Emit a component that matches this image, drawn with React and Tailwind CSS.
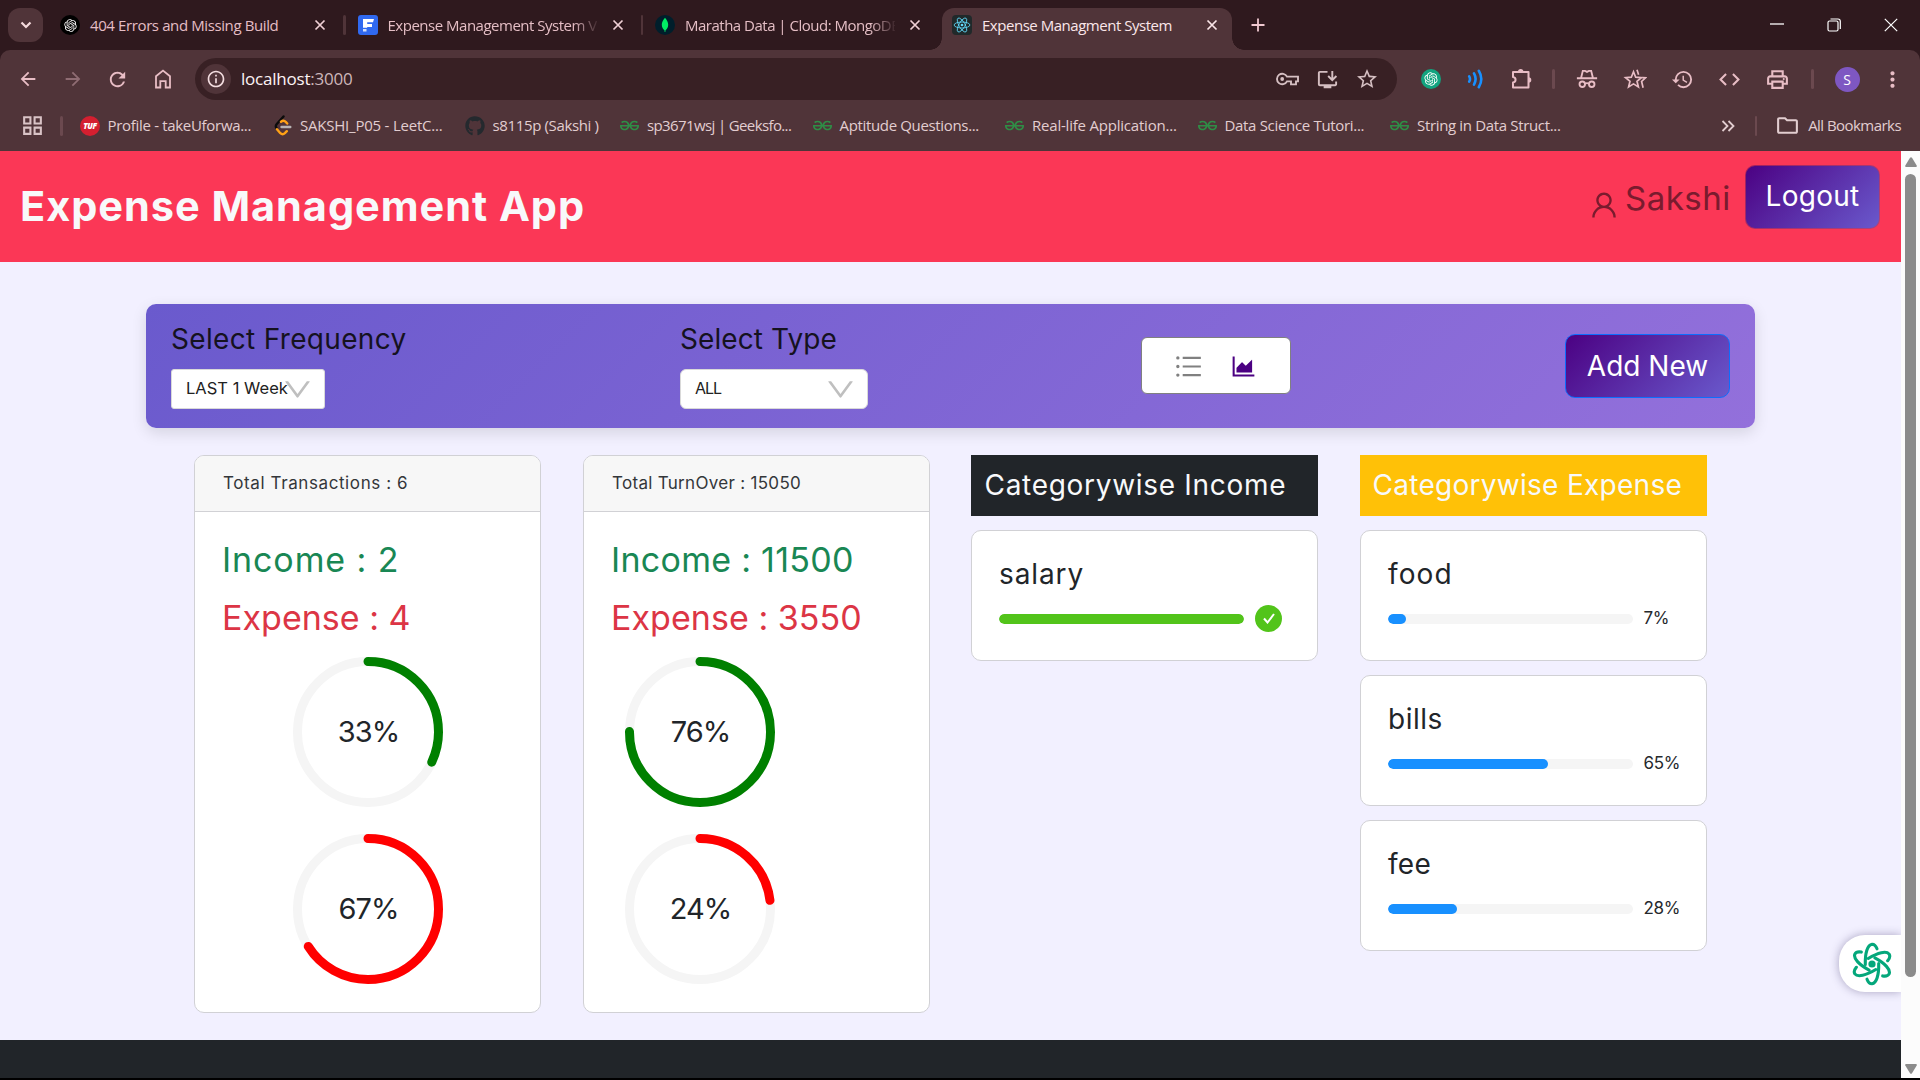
import React from "react";
import {
  MdArrowBack, MdArrowForward, MdRefresh, MdInfoOutline, MdOutlineInstallDesktop, MdStarOutline,
  MdHistory, MdCode, MdOutlinePrint, MdMoreVert, MdOutlineFolder, MdOutlineGridView,
} from "react-icons/md";
import { AiOutlineUnorderedList, AiOutlineAreaChart, AiOutlineUser, AiOutlineDown } from "react-icons/ai";
import { SiGeeksforgeeks } from "react-icons/si";
import { FaGithub } from "react-icons/fa";
import { RiOpenaiFill } from "react-icons/ri";

/* ---------- small drawings ---------- */

const CloseX = ({ className }) => (
  <svg viewBox="0 0 12 12" className={"h-3 w-3 shrink-0 " + className} stroke="currentColor" strokeWidth="1.7" fill="none">
    <path d="M1.5 1.5l9 9M10.5 1.5l-9 9" />
  </svg>
);

const ReactLogo = ({ className }) => (
  <svg viewBox="0 0 24 24" className={className} fill="none" stroke="#61dafb" strokeWidth="1.1">
    <ellipse cx="12" cy="12" rx="10.5" ry="4" />
    <ellipse cx="12" cy="12" rx="10.5" ry="4" transform="rotate(60 12 12)" />
    <ellipse cx="12" cy="12" rx="10.5" ry="4" transform="rotate(120 12 12)" />
    <circle cx="12" cy="12" r="1.8" fill="#61dafb" stroke="none" />
  </svg>
);

const HomeIcon = () => (
  <svg viewBox="0 0 20 22" className="h-[22px] w-5" fill="none" stroke="currentColor" strokeWidth="1.8">
    <path d="M3 19.5V8.2L10 2.6l7 5.6v11.3h-4.3v-6.3H7.3v6.3z" />
  </svg>
);

const KeyIcon = () => (
  <svg viewBox="0 0 24 16" className="h-4 w-6" fill="none" stroke="currentColor" strokeWidth="1.9">
    <path d="M12 5.6A5.3 5.3 0 1 0 12 10.4h4v3h5v-3h2V5.6z" />
    <circle cx="7.2" cy="8" r="1.9" fill="currentColor" stroke="none" />
  </svg>
);

const PuzzleIcon = () => (
  <svg viewBox="0 0 24 24" className="ml-0.5 h-6 w-6" fill="none" stroke="currentColor" strokeWidth="2" strokeLinejoin="round">
    <path d="M3 5h15.5v15.5H3V15.5c3.4-.6 3.4-5 0-5.6z" />
    <path d="M8 4.800a2.700 2.700 0 0 1 5.400 0zM18.600 10.200a2.700 2.700 0 0 1 0 5.400z" fill="currentColor" stroke="none" />
  </svg>
);

const WavesIcon = () => (
  <svg viewBox="0 0 18 20" className="h-5 w-[18px]" fill="none" stroke="#1890ff" strokeWidth="2.6" strokeLinecap="round">
    <path d="M2.2 7.3q1.6 2.7 0 5.4M7 4.4q3.2 5.6 0 11.2M11.8 1.8q5 8.2 0 16.4" />
  </svg>
);

const IncognitoIcon = () => (
  <svg viewBox="0 0 20 20" className="h-[22px] w-[22px]" fill="none" stroke="currentColor" strokeWidth="1.7">
    <path d="M.8 9.3h18.400M4.600 9l1.600-6.400h2L10 3.500l1.800-.9h2L15.400 9" />
    <circle cx="5.700" cy="14.800" r="2.500" />
    <circle cx="14.300" cy="14.800" r="2.500" />
    <path d="M8 14.300q2-1 4 0" />
  </svg>
);

const StarsIcon = () => (
  <svg viewBox="0 0 24 22" className="h-[22px] w-6" fill="none" stroke="currentColor" strokeWidth="1.7">
    <path d="M10.500 3.800l2.200 5.400 5.700.4-4.400 3.700 1.400 5.700-4.900-3.100-4.900 3.100L7 13.300 2.600 9.600l5.700-.4z" />
    <path d="M14 1.800l1.600 4.900M19.300 9.600l3.200.2-3.900 3.700 1.500 6.200" />
  </svg>
);

const LeetCodeIcon = () => (
  <svg viewBox="0 0 18 21" className="h-[21px] w-[18px]" fill="none" strokeWidth="2.400" strokeLinecap="round">
    <path d="M9.500 1.500L2.800 9q-1.800 2-.2 4.300" stroke="#0b0b0b" />
    <path d="M3 14.200l3.300 4q2.300 2 4.600 0l1.900-2M7 6.800q2.500-2 5 .3l1.200 1.400" stroke="#ffa116" />
    <path d="M7.500 12h8.800" stroke="#b8b3b3" />
  </svg>
);

const LeafIcon = () => (
  <svg viewBox="0 0 20 20" className="h-5 w-5">
    <circle cx="10" cy="10" r="10" fill="#001e2b" />
    <path d="M10 2.800c2 2.300 3.200 4.600 3.200 7 0 2.500-1.200 4.200-2.700 5.400L10.300 17h-.6l-.2-1.800C8 14 6.800 12.300 6.800 9.800c0-2.400 1.200-4.700 3.200-7z" fill="#00ed64" />
  </svg>
);

const FreelancerIcon = () => (
  <span className="flex h-5 w-5 items-center justify-center rounded-[3px] bg-[#3069f0]">
    <svg viewBox="0 0 14 14" className="h-[14px] w-[14px]" fill="#fff">
      <path d="M2 1h11l-1 3.200H6.200V6H11v3H6.200v.8H2z" />
      <path d="M2 11h3.500v2.500H2z" opacity=".8" />
    </svg>
  </span>
);

const AtomIcon = () => (
  <svg viewBox="0 0 40 44" className="h-11 w-10" fill="none" stroke="#04a77b" strokeWidth="3.1" strokeLinecap="round">
    {[0, 60, 120, 180, 240, 300].map((a) => (
      <path key={a} transform={`rotate(${a} 20 22)`} d="M13.300 22.500C13 11 15.500 2.800 20 2.200c2.200-.1 3.900 1.600 5 4.600" />
    ))}
    <circle cx="20" cy="22" r="3.600" fill="#04a77b" stroke="none" />
  </svg>
);

/* ---------- browser chrome ---------- */

const chromeFont = "font-['Open_Sans','Noto_Sans',sans-serif] whitespace-pre";

function Tab({ icon, title, tracking, fade, separator }) {
  return (
    <div className="flex h-full w-[297.5px] items-center pl-[11px]">
      <span className="h-5 w-5 shrink-0">{icon}</span>
      <span
        className={
          "ml-[10px] w-[210px] shrink-0 text-[15px] text-[#e5bec5] " + tracking +
          (fade ? " [mask-image:linear-gradient(90deg,#000_185px,transparent_212px)]" : "")
        }
      >
        {title}
      </span>
      <CloseX className="ml-[14px] text-[#f0d0d5]" />
      {separator && <span className="ml-[17px] h-5 w-[2.5px] rounded bg-[#503439]" />}
    </div>
  );
}

function TabStrip() {
  return (
    <div className="flex h-[50px] items-center bg-[#2f191e]">
      <button className="ml-2 mr-[6px] flex h-[34px] w-[35px] items-center justify-center rounded-xl bg-[#503439]">
        <svg viewBox="0 0 12 8" className="h-2 w-3" fill="none" stroke="#f5dadd" strokeWidth="2.2">
          <path d="M1.5 1.5L6 6l4.5-4.5" />
        </svg>
      </button>
      <Tab
        title="404 Errors and Missing Build"
        tracking="tracking-[-0.39px]"
        icon={<span className="flex h-5 w-5 items-center justify-center rounded-full bg-black text-white"><RiOpenaiFill size={15} /></span>}
        separator
      />
      <Tab title="Expense Management System V" tracking="tracking-[-0.49px]" fade icon={<FreelancerIcon />} separator />
      <Tab title="Maratha Data | Cloud: MongoDB" tracking="tracking-[-0.5px]" fade icon={<LeafIcon />} />
      <div className="relative mt-2 flex h-[42px] w-[290px] items-center self-start rounded-t-[12px] bg-[#503439] pl-[10.5px]">
        <span className="absolute -left-3 bottom-0 h-3 w-3 bg-[radial-gradient(circle_at_0_0,#2f191e_11.5px,#503439_12px)]" />
        <span className="absolute -right-3 bottom-0 h-3 w-3 bg-[radial-gradient(circle_at_100%_0,#2f191e_11.5px,#503439_12px)]" />
        <span className="mb-2 flex h-5 w-5 items-center justify-center rounded-sm bg-[#20292a]">
          <ReactLogo className="h-[18px] w-[18px]" />
        </span>
        <span className="mb-2 ml-[10px] w-[210px] text-[15px] tracking-[-0.47px] text-[#fbe6e9]">Expense Managment System</span>
        <CloseX className="mb-2 ml-[14px] text-[#fbe6e9]" />
      </div>
      <svg viewBox="0 0 14 14" className="ml-[19px] h-[14px] w-[14px]" stroke="#f0c8d0" strokeWidth="1.8">
        <path d="M7 .5v13M.5 7h13" />
      </svg>
      <div className="ml-auto mr-[22px] flex items-center gap-[43px] text-white">
        <svg viewBox="0 0 14 14" className="h-[14px] w-[14px]" stroke="currentColor" strokeWidth="1.3"><path d="M0 6h14" /></svg>
        <svg viewBox="0 0 14 14" className="h-[14px] w-[14px]" fill="none" stroke="currentColor" strokeWidth="1.2">
          <rect x="1" y="3" width="10" height="10" rx="1.5" />
          <path d="M3.5 1h7.500a2.300 2.300 0 0 1 2.300 2.300V11" />
        </svg>
        <svg viewBox="0 0 14 14" className="h-[14px] w-[14px]" stroke="currentColor" strokeWidth="1.2"><path d="M.8.8l12.400 12.400M13.200.8L.8 13.200" /></svg>
      </div>
    </div>
  );
}

const Cell = ({ w, children }) => <span className={"flex shrink-0 items-center justify-center " + w}>{children}</span>;

function Toolbar() {
  return (
    <div className="flex h-[58px] items-center text-[#e8bdc5]">
      <div className="ml-[5px] flex">
        <Cell w="w-[45px]"><MdArrowBack size={22} /></Cell>
        <Cell w="w-[45px]"><MdArrowForward size={22} className="text-[#8f6c73]" /></Cell>
        <Cell w="w-[45px]"><MdRefresh size={23} /></Cell>
        <Cell w="w-[45px]"><HomeIcon /></Cell>
      </div>
      <div className="ml-[10px] flex h-[42px] w-[1202px] items-center rounded-full bg-[#382024] pl-[6px] pr-[10px] text-[#d5bfc2]">
        <span className="flex h-[30px] w-[30px] items-center justify-center rounded-full bg-[#503439] text-[#f3dde0]">
          <MdInfoOutline size={20} />
        </span>
        <span className="ml-[10px] text-[17px] tracking-[-0.22px] text-[#fdf3f4]">
          localhost<span className="text-[#cdb6ba]">:3000</span>
        </span>
        <div className="ml-auto flex">
          <Cell w="w-10"><KeyIcon /></Cell>
          <Cell w="w-10"><MdOutlineInstallDesktop size={23} /></Cell>
          <Cell w="w-10"><MdStarOutline size={24} /></Cell>
        </div>
      </div>
      <div className="ml-[11px] flex">
        <Cell w="w-[45px]">
          <span className="flex h-5 w-5 items-center justify-center rounded-full bg-[#12a37f] text-white"><RiOpenaiFill size={16} /></span>
        </Cell>
        <Cell w="w-[45px]"><WavesIcon /></Cell>
        <Cell w="w-[45px]"><PuzzleIcon /></Cell>
      </div>
      <span className="ml-[9px] mr-[9px] h-5 w-[2.5px] rounded bg-[#6b494f]" />
      <div className="flex">
        <Cell w="w-[47.5px]"><IncognitoIcon /></Cell>
        <Cell w="w-[47.5px]"><StarsIcon /></Cell>
        <Cell w="w-[47.5px]"><MdHistory size={23} /></Cell>
        <Cell w="w-[47.5px]"><MdCode size={25} /></Cell>
        <Cell w="w-[47.5px]"><MdOutlinePrint size={25} /></Cell>
      </div>
      <span className="ml-[10px] mr-[21px] h-5 w-[2.5px] rounded bg-[#6b494f]" />
      <span className="flex h-[25px] w-[25px] items-center justify-center rounded-full bg-[#7e57c2] text-[14px] text-white">S</span>
      <MdMoreVert size={25} className="ml-[20px]" />
    </div>
  );
}

const gfg = <SiGeeksforgeeks size={19} className="text-[#2f8d46]" />;
const bookmarks = [
  {
    label: "Profile - takeUforwa...", w: "w-[192.5px]", t: "tracking-[-0.31px]",
    icon: <span className="flex h-5 w-5 items-center justify-center rounded-full bg-[#d41f30] text-[8px] font-extrabold italic tracking-[-0.3px] text-white">TUF</span>,
  },
  { label: "SAKSHI_P05 - LeetC...", w: "w-[192.5px]", t: "tracking-[-0.22px]", icon: <LeetCodeIcon /> },
  { label: "s8115p (Sakshi )", w: "w-[154.5px]", t: "tracking-[-0.36px]", icon: <FaGithub size={20} className="text-[#24292e]" /> },
  { label: "sp3671wsj | Geeksfo...", w: "w-[192.5px]", t: "tracking-[-0.62px]", icon: gfg },
  { label: "Aptitude Questions...", w: "w-[192.5px]", t: "tracking-[-0.34px]", icon: gfg },
  { label: "Real-life Application...", w: "w-[192.5px]", t: "tracking-[-0.21px]", icon: gfg },
  { label: "Data Science Tutori...", w: "w-[192.5px]", t: "tracking-[-0.32px]", icon: gfg },
  { label: "String in Data Struct...", w: "w-[192.5px]", t: "tracking-[-0.34px]", icon: gfg },
];

function BookmarksBar() {
  return (
    <div className="flex h-[43px] items-center pb-[8px] text-[15px] text-[#e2cdd0]">
      <MdOutlineGridView size={25} className="ml-5 text-[#d9c3c6]" />
      <span className="ml-[15px] mr-[17px] h-5 w-[2.5px] rounded bg-[#6b494f]" />
      {bookmarks.map((b) => (
        <div key={b.label} className={"flex shrink-0 items-center " + b.w}>
          <span className="flex w-[21px] justify-center">{b.icon}</span>
          <span className={"ml-[7px] " + b.t}>{b.label}</span>
        </div>
      ))}
      <svg viewBox="0 0 14 12" className="ml-auto h-3 w-[14px]" fill="none" stroke="currentColor" strokeWidth="1.8">
        <path d="M1.5 1l5 5-5 5M7.500 1l5 5-5 5" />
      </svg>
      <span className="ml-[20px] mr-[18px] h-5 w-[2.5px] rounded bg-[#6b494f]" />
      <MdOutlineFolder size={25} />
      <span className="ml-[8px] mr-[19px] tracking-[-0.55px]">All Bookmarks</span>
    </div>
  );
}

/* ---------- application ---------- */

const buttonBase =
  "flex items-center justify-center rounded-[10px] border bg-[linear-gradient(135deg,#4b0082,#6a5acd)] bg-origin-border text-[28px] leading-none text-white";

function AppHeader() {
  return (
    <header className="flex h-[111px] items-start bg-[#fb3756]">
      <h2 className="ml-[20px] mt-[30px] text-[41.5px] font-bold leading-[50px] tracking-[0.95px] text-[#f8f9fa]">
        Expense Management App
      </h2>
      <div className="ml-auto mr-[21px] mt-[14px] flex">
        <AiOutlineUser size={32} className="mt-[24px] text-[#7a1b2e]" />
        <span className="ml-[5px] mt-[12px] w-[120px] text-[33px] leading-[42px] tracking-[0.5px] text-[#7a1b2e]">Sakshi</span>
        <button className={buttonBase + " h-[64px] w-[135px] border-[#dc3545]/60 pb-[2px] tracking-[0.25px]"}>Logout</button>
      </div>
    </header>
  );
}

function Select({ value, className, valueClass }) {
  return (
    <div className={"flex h-[40px] items-center border border-[#d9d9d9] bg-white pl-[14px] text-[#222] " + className}>
      <span className={"grow whitespace-nowrap pb-[2px] " + valueClass}>{value}</span>
      <AiOutlineDown size={33} className="-ml-[10px] mr-[10px] shrink-0 text-[#bfbfbf]" />
    </div>
  );
}

function Filters() {
  return (
    <div className="ml-[146px] mt-[42px] flex h-[124px] w-[1609px] rounded-[10px] bg-[linear-gradient(135deg,#6a5acd,#9370db)] shadow-[0_5px_15px_rgba(0,0,0,0.12)]">
      <div className="ml-[25px] w-[509px] pt-[18px]">
        <h6 className="text-[28px] leading-[34px] tracking-[0.33px] text-[#15121f]">Select Frequency</h6>
        <Select value="LAST 1 Week" className="mt-[13px] w-[154px] rounded-[3px]" valueClass="text-[16.5px] tracking-[0.02px]" />
      </div>
      <div className="w-[461px] pt-[18px]">
        <h6 className="text-[28px] leading-[34px] tracking-[0.09px] text-[#15121f]">Select Type</h6>
        <Select value="ALL" className="mt-[13px] w-[188px] rounded-[6px]" valueClass="text-[16px] tracking-[-1px]" />
      </div>
      <div className="mt-[33px] flex h-[57px] w-[150px] items-center rounded-[6px] border border-[#808080] bg-white pl-[31px] pt-px">
        <AiOutlineUnorderedList size={31} className="text-[#808080]" />
        <AiOutlineAreaChart size={29} className="ml-[25px] text-[#4b0082]" />
      </div>
      <button className={buttonBase + " ml-auto mr-[25px] mt-[30px] h-[64px] w-[165px] border-[#0d6efd] pb-px"}>
        Add New
      </button>
    </div>
  );
}

const CIRC = 2 * Math.PI * 47;

function Ring({ percent, color }) {
  return (
    <div className="relative h-[150px] w-[150px]">
      <svg viewBox="0 0 100 100" className="h-full w-full -rotate-90" fill="none" strokeWidth="6">
        <circle cx="50" cy="50" r="47" stroke="#f5f5f5" />
        <circle
          cx="50" cy="50" r="47" stroke={color} strokeLinecap="round"
          strokeDasharray={`${(percent / 100) * CIRC - 3} ${CIRC}`}
        />
      </svg>
      <span className="absolute inset-0 flex items-center justify-center pl-px text-[29px] tracking-[-1px] text-[#212529]">{percent}%</span>
    </div>
  );
}

function StatCard({ title, titleClass, income, incomeClass, expense, expenseClass, rings, ringsClass }) {
  return (
    <section className="h-[558px] w-[347px] overflow-hidden rounded-[10px] border border-[#d1d1d5] bg-white">
      <div className={"h-[56px] border-b border-[#d1d1d5] bg-[#f7f7f7] pl-[28px] text-[17px] leading-[55px] text-[#33363a] " + titleClass}>
        {title}
      </div>
      <h5 className={"ml-[27px] mt-[27px] text-[34px] leading-[42px] text-[#198754] " + incomeClass}>{income}</h5>
      <h5 className={"ml-[27px] mt-[16px] text-[34px] leading-[42px] text-[#dc3545] " + expenseClass}>{expense}</h5>
      <div className={"mt-[18px] flex flex-col gap-[27px] " + ringsClass}>
        <Ring percent={rings[0]} color="green" />
        <Ring percent={rings[1]} color="red" />
      </div>
    </section>
  );
}

function CategoryCard({ name, nameClass, percent }) {
  const done = percent === 100;
  return (
    <div className="mt-[14px] h-[131px] w-[347px] rounded-[10px] border border-[#d1d1d5] bg-white">
      <h5 className={"ml-[27px] mt-[25px] text-[28px] leading-[36px] text-[#212529] " + nameClass}>{name}</h5>
      <div className="ml-[27.4px] mt-[13px] flex h-[28px] items-center">
        <div className="h-[10px] w-[245px] overflow-hidden rounded-full bg-[#f5f5f5]">
          <div
            className={"h-full rounded-full " + (done ? "bg-[#52c41a]" : "bg-[#1890ff]")}
            style={{ width: `${percent}%` }}
          />
        </div>
        {done ? (
          <span className="mb-px ml-[11px] flex h-[27px] w-[27px] items-center justify-center rounded-full bg-[#52c41a]">
            <svg viewBox="0 0 12 11" className="h-[11px] w-3" fill="none" stroke="#fff" strokeWidth="2">
              <path d="M1 5.500l3.500 4L11 1" />
            </svg>
          </span>
        ) : (
          <span className="ml-[10px] pb-[2px] text-[17px] leading-none tracking-[-0.3px] text-[#26292d]">{percent}%</span>
        )}
      </div>
    </div>
  );
}

function Dashboard() {
  return (
    <div className="ml-[194px] mt-[27px] flex h-[558px]">
      <StatCard
        title="Total Transactions : 6" titleClass="tracking-[0.6px]"
        income="Income : 2" incomeClass="tracking-[0.9px]"
        expense="Expense : 4" expenseClass="tracking-[0.02px]"
        rings={[33, 67]} ringsClass="ml-[98px]"
      />
      <div className="ml-[42px]">
        <StatCard
          title="Total TurnOver : 15050" titleClass="tracking-[0.3px]"
          income="Income : 11500" incomeClass="tracking-[0.28px]"
          expense="Expense : 3550" expenseClass="tracking-[0.04px]"
          rings={[76, 24]} ringsClass="ml-[41px]"
        />
      </div>
      <div className="ml-[41px] w-[347px]">
        <h4 className="h-[61px] bg-[#212529] pl-[13.5px] text-[28px] leading-[61px] tracking-[0.7px] text-[#f8f9fa]">Categorywise Income</h4>
        <CategoryCard name="salary" nameClass="tracking-[0.9px]" percent={100} />
      </div>
      <div className="ml-[42px] w-[347px]">
        <h4 className="h-[61px] bg-[#ffc107] pl-[12.5px] text-[28px] leading-[61px] tracking-[0.28px] text-[#f8f9fa]">Categorywise Expense</h4>
        <CategoryCard name="food" nameClass="tracking-[1.1px]" percent={7} />
        <CategoryCard name="bills" nameClass="tracking-[0.5px]" percent={65} />
        <CategoryCard name="fee" nameClass="tracking-[0.3px]" percent={28} />
      </div>
    </div>
  );
}

const ScrollArrow = ({ className }) => (
  <svg viewBox="0 0 12 10" className={"h-[10px] w-3 " + className} fill="#8b8b8b">
    <path d="M5 .8q1-1.200 2 0l4.700 7.700q.5 1.300-.8 1.500H1.100Q-.2 9.800.3 8.500z" />
  </svg>
);

function Scrollbar() {
  return (
    <div className="flex w-[19px] shrink-0 flex-col items-center bg-[#fcfcfc] pt-[6px]">
      <ScrollArrow className="" />
      <div className="mt-[7px] h-[803px] w-[11px] rounded-full bg-[#8b8b8b]" />
      <ScrollArrow className="mt-[87px] rotate-180" />
    </div>
  );
}

export default function App() {
  return (
    <div className="flex h-[1080px] w-[1920px] flex-col overflow-hidden bg-black">
      <div className={chromeFont}>
        <TabStrip />
        <div className="bg-[#2f191e]">
          <div className="rounded-t-[10px] bg-[#503439]">
            <Toolbar />
            <BookmarksBar />
          </div>
        </div>
      </div>
      <div className="flex h-[927px] font-['Inter','Liberation_Sans',sans-serif]">
        <main className="relative flex h-full w-[1901px] flex-col overflow-hidden bg-[#f2f0ff]">
          <AppHeader />
          <Filters />
          <Dashboard />
          <footer className="mt-auto h-[38px] bg-[#212529]" />
          <div className="absolute right-0 top-[784px] flex h-[57px] w-[62px] items-center rounded-l-[26px] bg-white pl-[13px] shadow-[0_0_10px_rgba(60,50,100,0.4)]">
            <AtomIcon />
          </div>
        </main>
        <Scrollbar />
      </div>
    </div>
  );
}
